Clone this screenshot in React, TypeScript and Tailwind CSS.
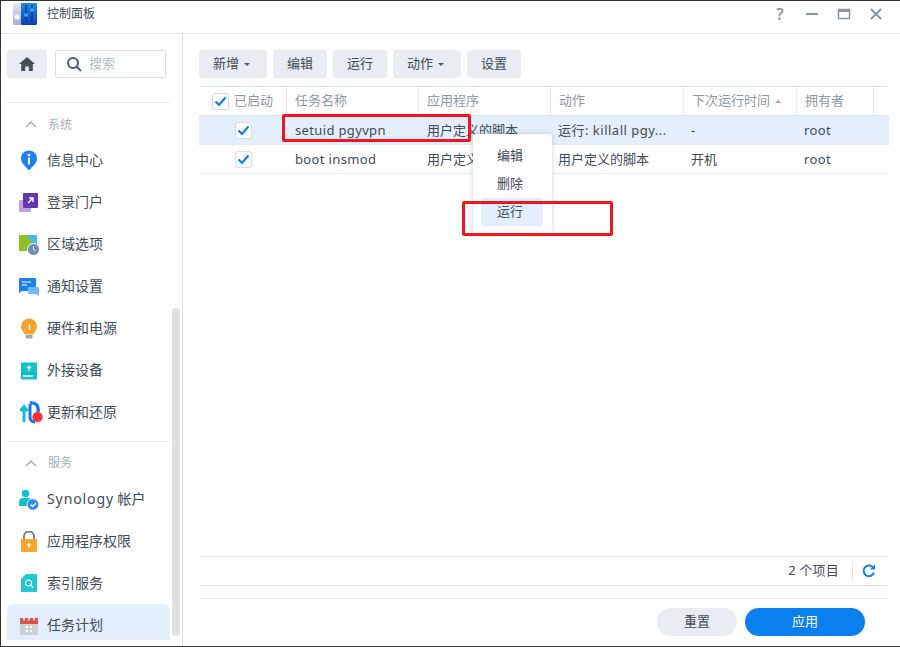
import React from "react";

const font = { fontFamily: '"Noto Sans","Noto Sans CJK SC",sans-serif' };

function AppIcon() {
  return (
    <svg width="26" height="22" viewBox="0 3 26 22">
      <defs>
        <linearGradient id="a" x1="0" y1="0" x2="0" y2="1"><stop offset="0" stopColor="#e4e6f0" /><stop offset="1" stopColor="#a9add0" /></linearGradient>
        <linearGradient id="b" x1="0" y1="0" x2="0" y2="1"><stop offset="0" stopColor="#1b8fe8" /><stop offset="1" stopColor="#0a3fb8" /></linearGradient>
      </defs>
      <rect x="1" y="3" width="10" height="22" rx="1.5" fill="url(#a)" />
      <circle cx="5" cy="17" r="2.6" fill="#f2f3f6" />
      <rect x="9" y="3" width="16" height="22" rx="1" fill="url(#b)" />
      <path d="M14 5v17M20 5v17" stroke="#0c2f7c" strokeWidth="1.2" />
      <circle cx="14" cy="15" r="1.8" fill="#4db0f5" />
      <circle cx="20" cy="10" r="1.8" fill="#4db0f5" />
    </svg>
  );
}

const icons: Record<string, React.ReactNode> = {
  info: (
    <svg width="18" height="22" viewBox="0 0 18 22">
      <path d="M9 0.5C4 0.5 1 4.2 1 8.5c0 2.5 1 4.4 2.6 6L9 20.5l5.4-6c1.6-1.6 2.6-3.5 2.6-6C17 4.2 14 .5 9 .5z" fill="#1f80f5" />
      <rect x="8" y="7.5" width="2" height="7" fill="#fff" />
      <circle cx="9" cy="5" r="1.3" fill="#fff" />
    </svg>
  ),
  login: (
    <svg width="20" height="20" viewBox="0 0 20 20">
      <rect x="0" y="7" width="12" height="12" fill="#bc9fe6" />
      <rect x="4" y="0" width="15" height="15" rx="1" fill="#6136b0" />
      <path d="M9 10l5-5M10 5h4v4" stroke="#fff" strokeWidth="1.4" fill="none" />
    </svg>
  ),
  region: (
    <svg width="22" height="22" viewBox="0 0 22 22">
      <rect x="1" y="1" width="18" height="16" fill="#47b8f5" />
      <path d="M1 1h7l5 6 6-6v0L8 17H1z" fill="#8cc320" />
      <path d="M19 1v7l-5-1z" fill="#47b8f5" />
      <circle cx="15.5" cy="15.5" r="6" fill="#6b8fb8" stroke="#fff" strokeWidth="1" />
      <path d="M15.5 12.5v3l2 1.5" stroke="#fff" strokeWidth="1" fill="none" />
    </svg>
  ),
  notify: (
    <svg width="22" height="20" viewBox="0 0 22 20">
      <path d="M1 2a1 1 0 011-1h15a1 1 0 011 1v12H4l-3 2z" fill="#1b7ff5" />
      <path d="M4 5h9M4 8h5" stroke="#fff" strokeWidth="1.2" />
      <path d="M11 10h9a1 1 0 011 1v6l0 2-3-2h-7a1 1 0 01-1-1v-5a1 1 0 011-1z" fill="#6cbcff" />
    </svg>
  ),
  bulb: (
    <svg width="18" height="22" viewBox="0 0 18 22">
      <path d="M9 .5a8 8 0 00-8 8c0 3 1.8 4.6 3 6.5.4.7.6 1.2.6 1.5h8.800c0-.3.2-.8.600-1.500 1.200-1.900 3-3.500 3-6.500a8 8 0 00-8-8z" fill="#f8a430" />
      <rect x="5.500" y="17" width="7" height="3.500" rx="1" fill="#9aa7b8" />
      <path d="M8.500 7.500l1-.5v5" stroke="#fff" strokeWidth="1.200" fill="none" />
    </svg>
  ),
  ext: (
    <svg width="18" height="18" viewBox="0 0 18 18">
      <rect x="1" y="0.500" width="16" height="17" rx="0.500" fill="#12c2c6" />
      <path d="M9 9V4M7 6l2-2 2 2" stroke="#fff" strokeWidth="1.200" fill="none" />
      <path d="M3 14h10" stroke="#fff" strokeWidth="1.400" />
      <path d="M1 12h16" stroke="#0aa8ac" strokeWidth="0.600" />
    </svg>
  ),
  update: (
    <svg width="26" height="24" viewBox="0 0 26 24" className="ml-[7px] shrink-0">
      <path d="M5 21V7M1.500 10L5 5.500 8.500 10" stroke="#18bcd8" strokeWidth="3" fill="none" />
      <path d="M11 2c6-1 9 3 8 9" stroke="#1677e8" strokeWidth="3.400" fill="none" />
      <path d="M11 3v13c0 3 2 5 5 5" stroke="#1677e8" strokeWidth="3" fill="none" />
      <circle cx="19" cy="17" r="6" fill="#000" opacity="0.120" />
      <circle cx="18.500" cy="16" r="5" fill="#f43038" />
    </svg>
  ),
  account: (
    <svg width="22" height="22" viewBox="0 0 22 22">
      <circle cx="7.500" cy="4.500" r="3.800" fill="#12c4c8" />
      <path d="M1 17v-4a4 4 0 014-4h5a4 4 0 014 4v4z" fill="#12c4c8" />
      <circle cx="15" cy="15.500" r="5.800" fill="#3388f0" stroke="#fff" strokeWidth="0.800" />
      <path d="M12.500 15.500l2 2 3.500-3.500" stroke="#fff" strokeWidth="1.300" fill="none" />
    </svg>
  ),
  lock: (
    <svg width="18" height="22" viewBox="0 0 18 22">
      <path d="M4 9V5.500a5 5 0 0110 0V9" stroke="#6f8199" strokeWidth="2" fill="none" />
      <rect x="1" y="8" width="16" height="13" rx="1" fill="#fba52c" />
      <circle cx="9" cy="13.500" r="1.500" fill="#fff" />
      <rect x="8.400" y="13.500" width="1.200" height="3.500" fill="#fff" />
    </svg>
  ),
  index: (
    <svg width="18" height="19" viewBox="0 0 18 19">
      <path d="M1 5l5-5h11v18H1z" fill="#1fc9cf" />
      <circle cx="8.500" cy="9" r="3" fill="none" stroke="#fff" strokeWidth="1.200" />
      <path d="M10.800 11.300l2.500 2.500" stroke="#fff" strokeWidth="1.200" />
    </svg>
  ),
  calendar: (
    <svg width="20" height="20" viewBox="0 0 20 20">
      <rect x="1" y="2" width="18" height="17" fill="#cdd1d6" />
      <rect x="1" y="2" width="18" height="6" fill="#d8544c" />
      <path d="M5 0.500v4M10 0.500v4M15 0.500v4" stroke="#e8ecef" strokeWidth="1.600" />
      <g fill="#fff"><rect x="7" y="10" width="2" height="2" /><rect x="11" y="10" width="2" height="2" /><rect x="7" y="14" width="2" height="2" /><rect x="11" y="14" width="2" height="2" /></g>
    </svg>
  ),
};

function Chevron() {
  return (
    <svg width="12" height="7" viewBox="0 0 12 7" className="ml-[24px] mr-[11px]">
      <path d="M1 6l5-5 5 5" stroke="#aab0b8" strokeWidth="1.500" fill="none" />
    </svg>
  );
}

function Item({ icon, label, active }: { icon: string; label: React.ReactNode; active?: boolean }) {
  return (
    <div className={`h-[36px] mx-[7px] w-[163px] flex items-center rounded-t-[6px] ${active ? "bg-[#e3effc] -mt-[3px] pt-[6px]" : ""}`}>
      <span className="w-[40px] shrink-0 flex justify-center pl-[3px] pt-[1px]">{icons[icon]}</span>
      <span className="text-[14px] text-[#414b55] whitespace-nowrap leading-none">{label}</span>
    </div>
  );
}

function Btn({ w, label, caret }: { w: string; label: string; caret?: boolean }) {
  return (
    <div className={`${w} h-[28px] rounded-[3px] bg-[#e9edf3] flex items-center justify-center text-[13px] text-[#414b55] ${caret ? "pr-[3px]" : ""}`}>
      {label}
      {caret && <span className="ml-[5px] mt-[1px] w-0 h-0 border-x-[3.5px] border-x-transparent border-t-[3px] border-t-[#525c66]" />}
    </div>
  );
}

function Check() {
  return (
    <span className="w-[17px] h-[17px] rounded-[3px] border border-[#d4dde6] bg-white flex items-center justify-center">
      <svg width="13" height="11" viewBox="0 0 13 11">
        <path d="M1.500 5.500l3.500 3.500 6.500-7.500" stroke="#0f7fe8" strokeWidth="2.200" fill="none" />
      </svg>
    </span>
  );
}

const cols = ["w-[88px]", "w-[132px]", "w-[132px]", "w-[133px]", "w-[113px]", "w-[77px]"];

function Row({ cells, selected }: { cells: string[]; selected?: boolean }) {
  return (
    <div className={`flex h-[29px] items-center border-b border-[#e6ebf1] text-[13px] text-[#414b55] ${selected ? "bg-[#e3effc]" : ""}`}>
      <div className={`${cols[0]} flex justify-center`}><Check /></div>
      <div className={`${cols[1]} pl-[8px] pt-[2px] tracking-[0.35px]`}>{cells[0]}</div>
      <div className={`${cols[2]} pl-[8px] pt-[2px]`}>{cells[1]}</div>
      <div className={`${cols[3]} pl-[7px] pt-[2px] whitespace-nowrap ${selected ? "tracking-[0.5px]" : ""}`}>{cells[2]}</div>
      <div className={`${cols[4]} pl-[7px] pt-[2px]`}>{cells[3]}</div>
      <div className={`${cols[5]} pl-[7px] pt-[2px] tracking-[0.35px]`}>{cells[4]}</div>
    </div>
  );
}

export default function App() {
  const head = ["", "任务名称", "应用程序", "动作", "下次运行时间", "拥有者"];
  return (
    <div className="relative w-[900px] h-[647px] bg-white border-t border-l border-b border-[#333] overflow-hidden flex flex-col" style={font}>
      {/* Title bar */}
      <div className="h-[33px] shrink-0 flex items-center border-b border-[#e3e8ee] pl-[11px] pr-[17px] pb-[6px]">
        <AppIcon />
        <span className="ml-[9px] text-[12px] text-[#414b55]">控制面板</span>
        <div className="ml-auto flex items-center gap-[18px] text-[#8a95a3]">
          <span className="w-[14px] text-center text-[16px] font-semibold leading-none">?</span>
          <svg width="14" height="14" viewBox="0 0 14 14"><path d="M1 7h12" stroke="#8a95a3" strokeWidth="2" /></svg>
          <svg width="14" height="14" viewBox="0 0 14 14"><rect x="1.500" y="2.500" width="11" height="9" fill="none" stroke="#8a95a3" strokeWidth="1.500" /><rect x="1" y="2" width="12" height="3" fill="#8a95a3" /></svg>
          <svg width="14" height="14" viewBox="0 0 14 14"><path d="M2 2l10 10M12 2L2 12" stroke="#8a95a3" strokeWidth="2" /></svg>
        </div>
      </div>

      <div className="flex-1 flex min-h-0">
        {/* Sidebar */}
        <div className="relative w-[182px] shrink-0 border-r border-[#dde4ec] overflow-hidden">
          <div className="flex gap-[8px] pl-[6px] pt-[16px]">
            <div className="w-[40px] h-[28px] rounded-[3px] bg-[#e9edf3] flex items-center justify-center">
              <svg width="16" height="14" viewBox="0 0 16 14"><path d="M8 0L0 7h2.200v7h4V9.500h3.600V14h4V7H16z" fill="#46505c" /></svg>
            </div>
            <div className="w-[111px] h-[28px] rounded-[3px] border border-[#d7dfe7] flex items-center pl-[10px]">
              <svg width="16" height="16" viewBox="0 0 16 16"><circle cx="7" cy="7" r="5" fill="none" stroke="#4e5a68" strokeWidth="2" /><path d="M10.500 10.500L15 15" stroke="#4e5a68" strokeWidth="2" /></svg>
              <span className="ml-[7px] text-[13px] text-[#b4bbc3]">搜索</span>
            </div>
          </div>
          <div className="mt-[24px] mx-[6px] w-[163px] border-t border-[#e6ebf1]" />
          <div className="h-[42px] flex items-center pt-[1px]">
            <Chevron /><span className="text-[12px] text-[#a8afb7]">系统</span>
          </div>
          <div className="-ml-[1px] flex flex-col gap-[6px] -mt-[3px]">
            <Item icon="info" label="信息中心" />
            <Item icon="login" label="登录门户" />
            <Item icon="region" label="区域选项" />
            <Item icon="notify" label="通知设置" />
            <Item icon="bulb" label="硬件和电源" />
            <Item icon="ext" label="外接设备" />
            <Item icon="update" label="更新和还原" />
          </div>
          <div className="mt-[11px] mx-[6px] w-[163px] border-t border-[#e6ebf1]" />
          <div className="h-[42px] flex items-center">
            <Chevron /><span className="text-[12px] text-[#a8afb7]">服务</span>
          </div>
          <div className="-ml-[1px] flex flex-col gap-[6px] -mt-[3px]">
            <Item icon="account" label={<><span className="tracking-[0.9px]">Synology</span> 帐户</>} />
            <Item icon="lock" label="应用程序权限" />
            <Item icon="index" label="索引服务" />
            <Item icon="calendar" label="任务计划" active />
          </div>
          <div className="absolute left-[171px] top-[274px] w-[8px] h-[328px] rounded-[4px] bg-[#e0e0e0]" />
        </div>

        {/* Main */}
        <div className="flex-1 min-w-0 flex flex-col pl-[16px] pr-[11px]">
          <div className="flex gap-[6px] pt-[16px]">
            <Btn w="w-[68px]" label="新增" caret />
            <Btn w="w-[54px]" label="编辑" />
            <Btn w="w-[54px]" label="运行" />
            <Btn w="w-[68px]" label="动作" caret />
            <Btn w="w-[54px]" label="设置" />
          </div>
          <div className="mt-[8px] flex h-[30px] items-center border-y border-[#dde4ec] text-[13px] text-[#8f98a2]">
            <div className={`${cols[0]} h-full flex items-center border-r border-[#e6ebf1] pl-[13px] gap-[5px]`}><Check /><span>已启动</span></div>
            {head.slice(1).map((h, i) => (
              <div key={h} className={`${cols[i + 1]} h-full flex items-center border-r border-[#e6ebf1] pl-[8px]`}>
                {h}
                {h === "下次运行时间" && <span className="ml-[5px] w-0 h-0 border-x-[3.5px] border-x-transparent border-b-[3px] border-b-[#98a1ab]" />}
              </div>
            ))}
          </div>
          <Row selected cells={["setuid pgyvpn", "用户定义的脚本", "运行: killall pgy...", "-", "root"]} />
          <Row cells={["boot insmod", "用户定义的脚本", "用户定义的脚本", "开机", "root"]} />
          <div className="flex-1" />
          <div className="h-[30px] shrink-0 border-y border-[#dde4ec] flex items-center justify-end text-[13px] text-[#414b55]">
            <span className="tracking-[0.2px]">2 个项目</span>
            <span className="ml-[13px] h-[20px] border-l border-[#dde4ec]" />
            <span className="ml-[9px] mr-[13px] flex">
              <svg width="14" height="14" viewBox="0 0 14 14"><path d="M12 8.500A5.300 5.300 0 1110.800 3.200" fill="none" stroke="#0f7fe8" strokeWidth="2" /><path d="M13 .5v5H8z" fill="#0f7fe8" /></svg>
            </span>
          </div>
          <div className="h-[48px] mt-[12px] shrink-0 border-t border-[#e3e8ee] flex items-start justify-end gap-[8px] pt-[9px] pr-[24px]">
            <div className="w-[80px] h-[28px] rounded-full bg-[#e9edf3] flex items-center justify-center text-[13px] text-[#414b55]">重置</div>
            <div className="w-[120px] h-[28px] rounded-full bg-[#0a80ee] flex items-center justify-center text-[13px] text-white">应用</div>
          </div>
        </div>
      </div>

      {/* Context menu */}
      <div className="absolute left-[472px] top-[133px] w-[79px] h-[100px] bg-white rounded-[3px] shadow-[0_0_5px_rgba(80,90,110,0.3)] pl-[8px] pr-[9px] pt-[8px] text-[13px]">
        <div className="h-[28px] pl-[16px] flex items-center text-[#414b55]">编辑</div>
        <div className="h-[28px] pl-[16px] flex items-center text-[#414b55]">删除</div>
        <div className="h-[28px] pl-[16px] flex items-center rounded-[3px] bg-[#e3effc] text-[#414b55]">运行</div>
      </div>

      {/* Annotations */}
      <div className="absolute left-[281px] top-[113px] w-[189px] h-[28px] border-[3px] border-[#f5141c] rounded-[2px]" />
      <div className="absolute left-[461px] top-[200px] w-[151px] h-[35px] border-[3px] border-[#f5141c] rounded-[2px]" />
    </div>
  );
}
